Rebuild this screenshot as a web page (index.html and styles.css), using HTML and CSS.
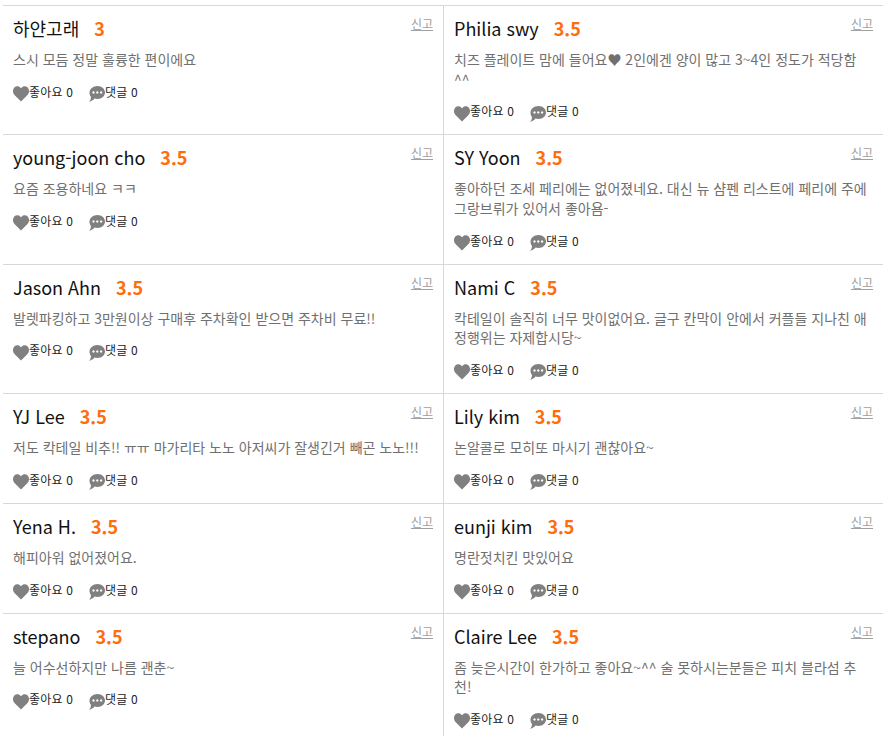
FILE: index.html
```html
<!DOCTYPE html>
<html lang="ko">
<head>
    <meta charset="UTF-8">
    <title>리뷰</title>
    <link rel="stylesheet" href="styles.css">
</head>
<body>
    <svg class="defs" width="0" height="0">
        <symbol id="heart" viewBox="0 0 16 16">
            <path d="M8 15.4 L1.5 9 C-0.5 7 -0.5 3.4 1.3 1.5 C3.1 -0.3 6.2 -0.2 8 2.3 C9.8 -0.2 12.9 -0.3 14.7 1.5 C16.5 3.4 16.5 7 14.5 9 Z"/>
        </symbol>
        <symbol id="bubble" viewBox="0 0 16 16">
            <path fill-rule="evenodd" d="M8.5 0 C12.7 0 16 2.9 16 6.5 C16 10.1 12.7 13 8.5 13 C7.4 13 6.4 12.9 5.5 12.6 C4.2 14.2 2.4 15.5 0.3 15.9 C1.2 14.6 1.9 12.9 2 11 C0.8 9.8 0.5 8 0.5 6.5 C0.5 2.9 4.3 0 8.5 0 Z M4.5 5.3 a1.2 1.2 0 1 0 0.01 0 Z M8.3 5.3 a1.2 1.2 0 1 0 0.01 0 Z M12.1 5.3 a1.2 1.2 0 1 0 0.01 0 Z"/>
        </symbol>
    </svg>
    <div class="reviews">
        <div class="review">
            <a class="report">신고</a>
            <div class="head"><span class="name">하얀고래</span><span class="score">3</span></div>
            <p class="text">스시 모듬 정말 훌륭한 편이에요</p>
            <div class="actions">
                <span class="action"><svg class="icon"><use href="#heart"/></svg>좋아요 0</span>
                <span class="action"><svg class="icon"><use href="#bubble"/></svg>댓글 0</span>
            </div>
        </div>
        <div class="review">
            <a class="report">신고</a>
            <div class="head"><span class="name">Philia swy</span><span class="score">3.5</span></div>
            <p class="text">치즈 플레이트 맘에 들어요♥ 2인에겐 양이 많고 3~4인 정도가 적당함 ^&#8288;^</p>
            <div class="actions">
                <span class="action"><svg class="icon"><use href="#heart"/></svg>좋아요 0</span>
                <span class="action"><svg class="icon"><use href="#bubble"/></svg>댓글 0</span>
            </div>
        </div>
        <div class="review">
            <a class="report">신고</a>
            <div class="head"><span class="name">young-joon cho</span><span class="score">3.5</span></div>
            <p class="text">요즘 조용하네요 ㅋㅋ</p>
            <div class="actions">
                <span class="action"><svg class="icon"><use href="#heart"/></svg>좋아요 0</span>
                <span class="action"><svg class="icon"><use href="#bubble"/></svg>댓글 0</span>
            </div>
        </div>
        <div class="review">
            <a class="report">신고</a>
            <div class="head"><span class="name">SY Yoon</span><span class="score">3.5</span></div>
            <p class="text">좋아하던 조세 페리에는 없어졌네요. 대신 뉴 샴펜 리스트에 페리에 주에 그랑브뤼가 있어서 좋아욤-</p>
            <div class="actions">
                <span class="action"><svg class="icon"><use href="#heart"/></svg>좋아요 0</span>
                <span class="action"><svg class="icon"><use href="#bubble"/></svg>댓글 0</span>
            </div>
        </div>
        <div class="review">
            <a class="report">신고</a>
            <div class="head"><span class="name">Jason Ahn</span><span class="score">3.5</span></div>
            <p class="text">발렛파킹하고 3만원이상 구매후 주차확인 받으면 주차비 무료!!</p>
            <div class="actions">
                <span class="action"><svg class="icon"><use href="#heart"/></svg>좋아요 0</span>
                <span class="action"><svg class="icon"><use href="#bubble"/></svg>댓글 0</span>
            </div>
        </div>
        <div class="review">
            <a class="report">신고</a>
            <div class="head"><span class="name">Nami C</span><span class="score">3.5</span></div>
            <p class="text">칵테일이 솔직히 너무 맛이없어요. 글구 칸막이 안에서 커플들 지나친 애정행위는 자제합시당~</p>
            <div class="actions">
                <span class="action"><svg class="icon"><use href="#heart"/></svg>좋아요 0</span>
                <span class="action"><svg class="icon"><use href="#bubble"/></svg>댓글 0</span>
            </div>
        </div>
        <div class="review">
            <a class="report">신고</a>
            <div class="head"><span class="name">YJ Lee</span><span class="score">3.5</span></div>
            <p class="text">저도 칵테일 비추!! ㅠㅠ 마가리타 노노 아저씨가 잘생긴거 빼곤 노노!!!</p>
            <div class="actions">
                <span class="action"><svg class="icon"><use href="#heart"/></svg>좋아요 0</span>
                <span class="action"><svg class="icon"><use href="#bubble"/></svg>댓글 0</span>
            </div>
        </div>
        <div class="review">
            <a class="report">신고</a>
            <div class="head"><span class="name">Lily kim</span><span class="score">3.5</span></div>
            <p class="text">논알콜로 모히또 마시기 괜찮아요~</p>
            <div class="actions">
                <span class="action"><svg class="icon"><use href="#heart"/></svg>좋아요 0</span>
                <span class="action"><svg class="icon"><use href="#bubble"/></svg>댓글 0</span>
            </div>
        </div>
        <div class="review">
            <a class="report">신고</a>
            <div class="head"><span class="name">Yena H.</span><span class="score">3.5</span></div>
            <p class="text">해피아워 없어졌어요.</p>
            <div class="actions">
                <span class="action"><svg class="icon"><use href="#heart"/></svg>좋아요 0</span>
                <span class="action"><svg class="icon"><use href="#bubble"/></svg>댓글 0</span>
            </div>
        </div>
        <div class="review">
            <a class="report">신고</a>
            <div class="head"><span class="name">eunji kim</span><span class="score">3.5</span></div>
            <p class="text">명란젓치킨 맛있어요</p>
            <div class="actions">
                <span class="action"><svg class="icon"><use href="#heart"/></svg>좋아요 0</span>
                <span class="action"><svg class="icon"><use href="#bubble"/></svg>댓글 0</span>
            </div>
        </div>
        <div class="review">
            <a class="report">신고</a>
            <div class="head"><span class="name">stepano</span><span class="score">3.5</span></div>
            <p class="text">늘 어수선하지만 나름 괜춘~</p>
            <div class="actions">
                <span class="action"><svg class="icon"><use href="#heart"/></svg>좋아요 0</span>
                <span class="action"><svg class="icon"><use href="#bubble"/></svg>댓글 0</span>
            </div>
        </div>
        <div class="review">
            <a class="report">신고</a>
            <div class="head"><span class="name">Claire Lee</span><span class="score">3.5</span></div>
            <p class="text">좀 늦은시간이 한가하고 좋아요~^^ 술 못하시는분들은 피치 블라섬 추천!</p>
            <div class="actions">
                <span class="action"><svg class="icon"><use href="#heart"/></svg>좋아요 0</span>
                <span class="action"><svg class="icon"><use href="#bubble"/></svg>댓글 0</span>
            </div>
        </div>
    </div>
</body>
</html>
```

FILE: styles.css
```css
html {
    overflow: hidden;
}
body {
    margin: 0;
    padding: 5px 9px 0 3px;
    background: #fff;
    font-family: "Noto Sans CJK KR", "Noto Sans", sans-serif;
}
.defs {
    position: absolute;
}
.reviews {
    display: grid;
    grid-template-columns: 441px 439px;
    border-top: 1px solid #d8d8d8;
}
.review {
    position: relative;
    padding: 9px 10px 14.2px;
    box-sizing: border-box;
    border-bottom: 1px solid #d8d8d8;
}
.review:nth-child(odd) {
    border-right: 1px solid #d8d8d8;
}
.head {
    display: flex;
    align-items: baseline;
    gap: 15px;
    height: 26px;
    line-height: 26px;
}
.name {
    font-size: 18px;
    color: #111;
}
.score {
    font-size: 18px;
    font-weight: 700;
    color: #ff6d0d;
}
.report {
    position: absolute;
    top: 8px;
    right: 10px;
    font-size: 12px;
    line-height: 19px;
    color: #a0a0a0;
    text-decoration: underline;
}
.text {
    margin: 9px 0 0;
    font-size: 14px;
    line-height: 19.6px;
    color: #707070;
    word-break: break-all;
}
.actions {
    display: flex;
    margin-top: 13px;
    font-size: 12px;
    line-height: 18px;
    letter-spacing: 0.2px;
    color: #222;
}
.action {
    display: flex;
    align-items: flex-start;
    width: 76px;
}
.icon {
    width: 16px;
    height: 16px;
    margin: 3.5px 0 -1.5px;
    fill: #808080;
}
```
